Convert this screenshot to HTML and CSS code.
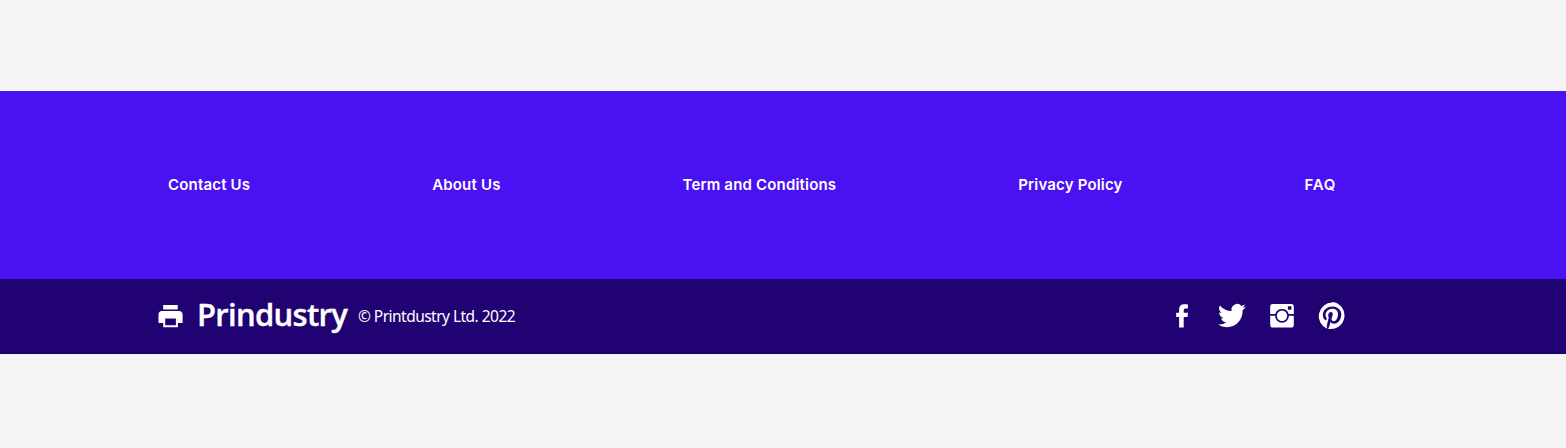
FILE: index.html
```html
<!DOCTYPE html>
<html lang="en">
<head>
<meta charset="utf-8">
<title>Prindustry</title>
<link rel="stylesheet" href="styles.css">
</head>
<body>
<footer class="footer">
  <nav class="links">
    <a class="link contact">Contact Us</a>
    <a class="link about">About Us</a>
    <a class="link terms">Term and Conditions</a>
    <a class="link privacy">Privacy Policy</a>
    <a class="link faq">FAQ</a>
  </nav>
  <div class="bottom">
    <div class="brand">
      <svg class="printer" viewBox="0 0 30 30"><path d="M8.200 4h14.500v4.500H8.200z"/><path fill-rule="evenodd" d="M7 9.900h16.900a3.700 3.700 0 0 1 3.700 3.700v8.400h-4.700v4.200H8.200V22H3.500v-8.400A3.700 3.700 0 0 1 7 9.900zM10.200 17.600v6.600h10.700v-6.600z"/></svg>
      <span class="name">Prindustry</span>
      <span class="copy">© Printdustry Ltd. 2022</span>
    </div>
    <div class="social">
      <svg class="icon" viewBox="0 0 30 30"><path d="M12.100 26.500V16H9.200V11.700h2.900V8.600c0-3.600 1.900-5.300 5.100-5.300 1.600 0 3.300.1 3.700.2v3.900h-2.200c-1.600 0-2 .8-2 2v2.300h4.300l-.5 4.300h-3.800v10.500z"/></svg>
      <svg class="icon" viewBox="0 0 24 24"><path d="M22.900 4.600c-.8.400-1.600.6-2.500.7a4.600 4.600 0 0 0 2-2.500c-.9.500-1.800.9-2.900 1.100a4.550 4.550 0 0 0-7.800 4.100A12.900 12.900 0 0 1 2.300 3.500a4.600 4.600 0 0 0 1.400 6.100c-.8 0-1.400-.2-2-.6 0 2.200 1.500 4.100 3.600 4.600-.6.200-1.400.2-2 .1a4.600 4.600 0 0 0 4.200 3.200A9.200 9.200 0 0 1 .8 18.800a13 13 0 0 0 7 2.100c8.400 0 13-7.100 12.700-13.600.9-.7 1.700-1.600 2.400-2.700z"/></svg>
      <svg class="icon" viewBox="0 0 30 30"><path fill-rule="evenodd" d="M5.800 3h18.400a2.600 2.600 0 0 1 2.600 2.600V13h-5.100a6.950 6.950 0 0 0-13.400 0H3.200V5.600A2.600 2.600 0 0 1 5.800 3zM20.900 5.300v3.500h3.500V5.300zM3.200 14.800h4.850a6.950 6.950 0 0 0 13.900 0h4.850v9.100a2.600 2.600 0 0 1-2.600 2.600H5.800a2.600 2.600 0 0 1-2.600-2.600z"/><circle cx="15" cy="14.800" r="5.200"/></svg>
      <svg class="icon" viewBox="0 0 24 24"><path d="M12.200 1.200A10.900 10.900 0 0 0 8 22.100c-.1-.8-.2-2.200 0-3.100l1.400-5.800s-.4-.7-.4-1.700c0-1.600.9-2.800 2.100-2.800 1 0 1.500.7 1.500 1.600 0 1-.6 2.400-1 3.800-.2 1.200.6 2.100 1.700 2.100 2.100 0 3.500-2.700 3.500-5.800 0-2.400-1.600-4.200-4.600-4.200a5.200 5.200 0 0 0-5.400 5.200c0 1 .3 1.700.8 2.200.2.200.2.400.1.600l-.2.900c-.1.300-.3.400-.6.200-1.500-.6-2.200-2.300-2.200-4.100 0-3.100 2.600-6.800 7.800-6.800 4.200 0 6.900 3 6.900 6.200 0 4.300-2.400 7.500-5.900 7.500-1.200 0-2.300-.6-2.700-1.300l-.8 2.900c-.3.900-.8 1.800-1.200 2.500a10.900 10.900 0 1 0 3.400-21.500z"/></svg>
    </div>
  </div>
</footer>
</body>
</html>
```
FILE: styles.css
```css
body {
  margin: 0;
  background: #f5f5f5;
  color: #fff;
}
.footer {
  padding-top: 91px;
}
.links {
  box-sizing: border-box;
  height: 188px;
  padding: 0 230px 0 168px;
  display: flex;
  align-items: center;
  justify-content: space-between;
  background: #4a11f2;
  font: 600 15px/24px "Inter", "Liberation Sans", sans-serif;
  letter-spacing: 0.180px;
}
.link {
  white-space: nowrap;
}
.faq {
  letter-spacing: 0.700px;
}
.bottom {
  box-sizing: border-box;
  height: 75px;
  padding: 0 219.500px 2px 155px;
  display: flex;
  align-items: center;
  justify-content: space-between;
  background: #200272;
}
.brand {
  display: flex;
  align-items: center;
  white-space: nowrap;
}
.printer {
  width: 30px;
  height: 30px;
  fill: #fff;
}
.name {
  width: 160px;
  margin-left: 12px;
  padding-bottom: 4px;
  font: 600 31px/40px "Open Sans", "Noto Sans", sans-serif;
  letter-spacing: -0.700px;
  -webkit-text-stroke: 0.400px #fff;
}
.copy {
  margin-left: 1px;
  font: 400 15.500px/24px "Noto Sans", "Open Sans", sans-serif;
  letter-spacing: -0.530px;
}
.social {
  display: flex;
  gap: 20px;
}
.icon {
  width: 30px;
  height: 30px;
  fill: #fff;
}
```
